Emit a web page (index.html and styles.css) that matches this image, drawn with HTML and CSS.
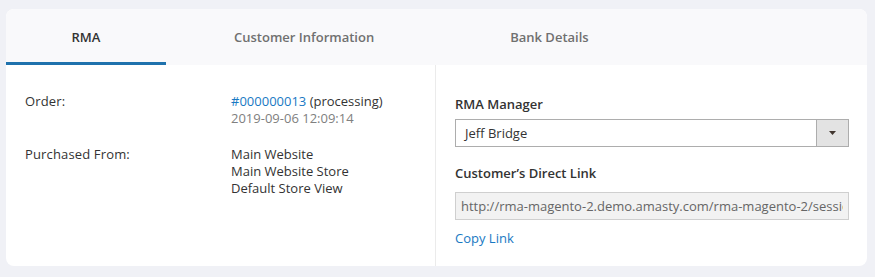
FILE: index.html
```
<!DOCTYPE html>
<html>
<head>
<meta charset="utf-8">
<link rel="stylesheet" href="styles.css">
</head>
<body>
<div class="card">
  <div class="tabs">
    <div class="tab active">RMA</div>
    <div class="tab">Customer Information</div>
    <div class="tab">Bank Details</div>
  </div>
  <div class="content">
    <div class="left">
      <div class="row">
        <div class="label">Order:</div>
        <div class="value">
          <div><a class="link" href="#">#000000013</a> (processing)</div>
          <div class="date">2019-09-06 12:09:14</div>
        </div>
      </div>
      <div class="row">
        <div class="label">Purchased From:</div>
        <div class="value">
          <div>Main Website</div>
          <div>Main Website Store</div>
          <div>Default Store View</div>
        </div>
      </div>
    </div>
    <div class="right">
      <div class="field-label">RMA Manager</div>
      <div class="select">
        <span class="select-text">Jeff Bridge</span>
        <span class="select-btn"><svg width="7" height="4" viewBox="0 0 7 4"><path d="M0 0H7L3.5 4Z" fill="#41362f"/></svg></span>
      </div>
      <div class="field-label second">Customer’s Direct Link</div>
      <input class="input" type="text" readonly value="http://rma-magento-2.demo.amasty.com/rma-magento-2/session/">
      <a class="link copy" href="#">Copy Link</a>
    </div>
  </div>
</div>
</body>
</html>
```
FILE: styles.css
```
html, body {
  margin: 0;
  padding: 0;
  background: #f0f1f6;
}
body {
  padding: 9px 8px 11px 6px;
  font-family: "Open Sans", "Noto Sans", sans-serif;
  font-size: 13px;
  color: #333;
}
.card {
  width: 861px;
  height: 257px;
  background: #fff;
  border-radius: 8px;
  overflow: hidden;
  display: flex;
  flex-direction: column;
}
.tabs {
  display: flex;
  height: 56px;
  background: #f9f9fb;
  flex: none;
}
.tab {
  padding: 0 68px;
  display: flex;
  align-items: center;
  justify-content: center;
  font-weight: 600;
  color: #707070;
  box-sizing: border-box;
}
.tab.active {
  width: 160px;
  padding: 0;
  color: #333;
  border-bottom: 3px solid #1f72ad;
  padding-top: 3px;
}
.content {
  flex: 1;
  display: flex;
}
.left {
  width: 430px;
  border-right: 1px solid #ebebeb;
  padding: 28px 19px 0 19px;
  box-sizing: border-box;
  line-height: 17px;
}
.row {
  display: flex;
  margin-bottom: 19px;
}
.label {
  width: 206px;
  flex: none;
  color: #333;
  letter-spacing: 0.15px;
}
.value {
  color: #333;
}
.date {
  color: #808080;
}
.link {
  color: #1979c3;
  text-decoration: none;
}
.right {
  flex: 1;
  padding: 31px 18px 0 19px;
  line-height: 17px;
  display: flex;
  flex-direction: column;
  align-items: flex-start;
  min-width: 0;
}
.field-label {
  font-weight: 600;
  color: #333;
}
.field-label.second {
  margin-top: 18px;
}
.select {
  margin-top: 6px;
  width: 100%;
  height: 28px;
  border: 1px solid #adadad;
  box-sizing: border-box;
  display: flex;
  align-items: center;
}
.select-text {
  flex: 1;
  padding-left: 9px;
  color: #333;
}
.select-btn {
  width: 31px;
  height: 100%;
  background: #e3e3e3;
  border-left: 1px solid #adadad;
  display: flex;
  align-items: center;
  justify-content: center;
}
.input {
  margin: 10px 0 0 0;
  width: 100%;
  height: 28px;
  border: 1px solid #cfcfcf;
  background: #f2f2f2;
  box-sizing: border-box;
  padding: 0 5px;
  font-family: "Open Sans", "Noto Sans", sans-serif;
  font-size: 13px;
  color: #666;
  outline: none;
}
.copy {
  margin-top: 10px;
}
```
